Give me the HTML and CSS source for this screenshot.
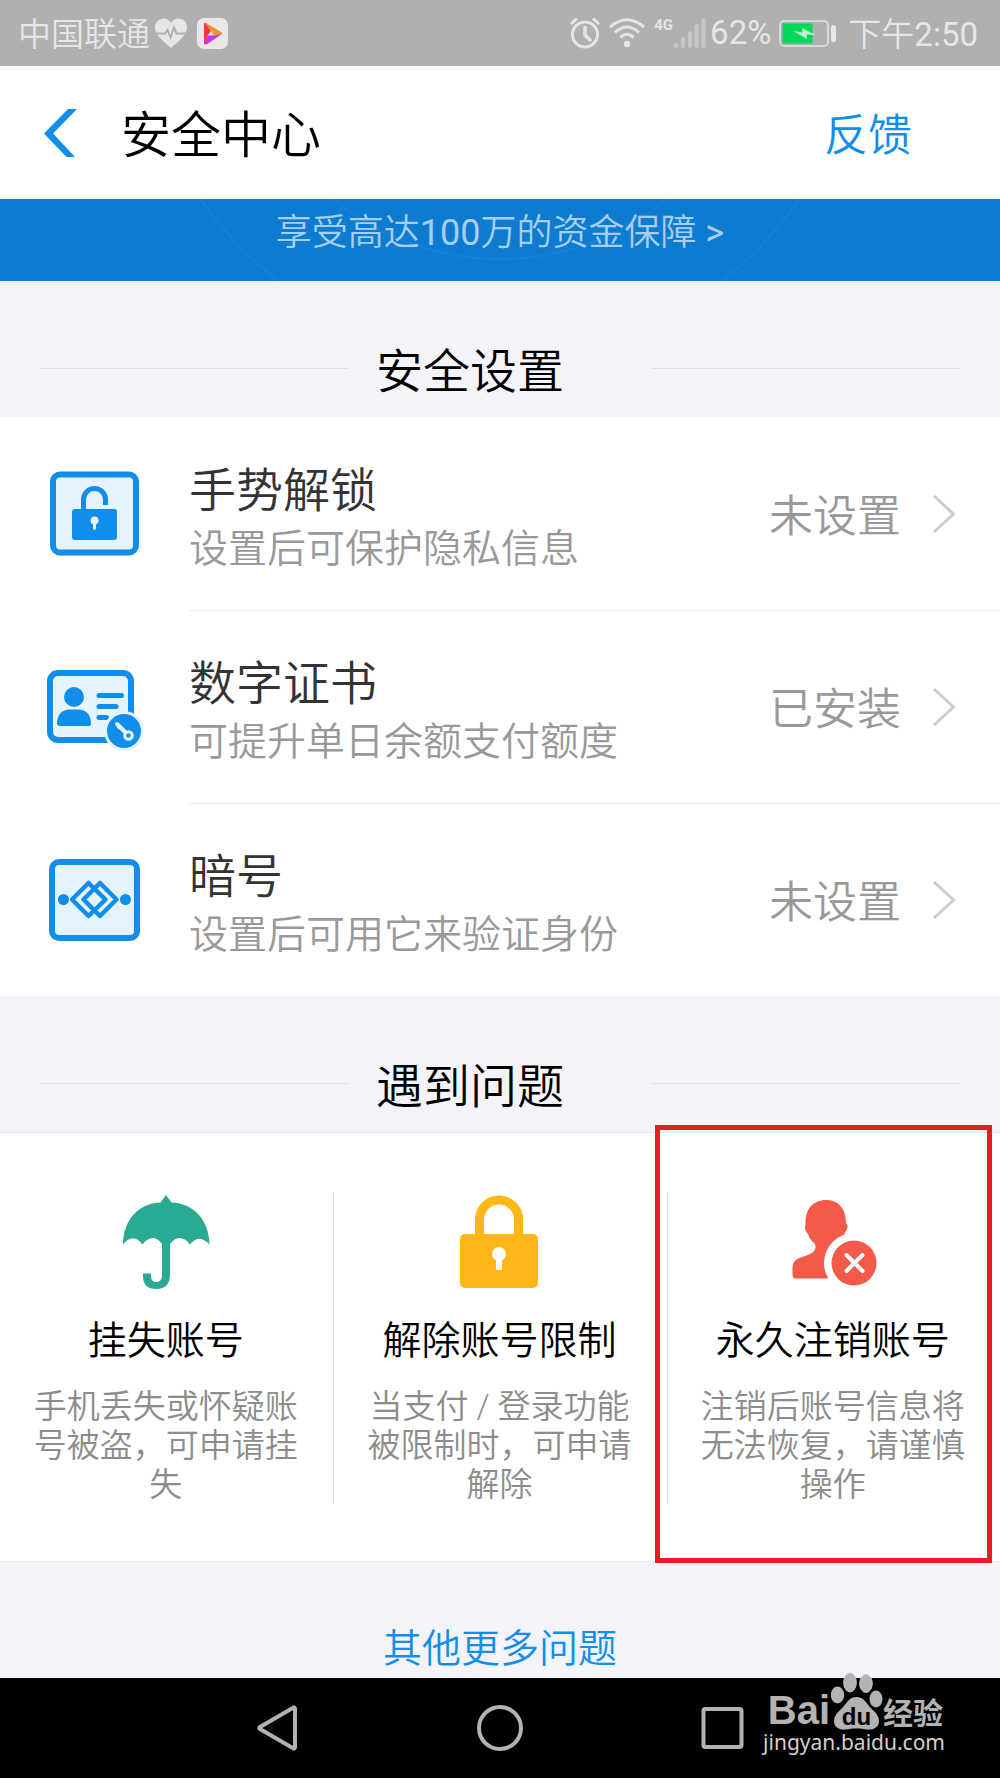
FILE: index.html
```html
<!DOCTYPE html>
<html lang="zh-CN">
<head>
<meta charset="utf-8">
<meta name="viewport" content="width=device-width, initial-scale=1">
<title>安全中心</title>
<link rel="stylesheet" href="styles.css">
</head>
<body>
<div class="status-bar">
  <span class="carrier">中国联通</span>
  <svg class="icon-heart" width="32" height="30" viewBox="0 0 32 30"><path fill="#e6e6e6" d="M16 30C11 25 0 18 0 9.500C0 4 4 .5 8.500 .5C12 .5 14.500 2.500 16 5C17.500 2.500 20 .5 23.500 .5C28 .5 32 4 32 9.500C32 18 21 25 16 30Z"/><path d="M1 15.500H10L12.500 12L15.500 19.500L19 9.500L21.500 15.500H31" fill="none" stroke="#b0b0b0" stroke-width="2"/></svg>
  <svg class="icon-app" width="31" height="31" viewBox="0 0 31 31"><rect width="31" height="31" rx="7" fill="#e8e8e8"/><path fill="#ee3a44" d="M7 6Q7 4.500 9 5L14 13L11 17L8 26.500Q7 26 7 25Z"/><path fill="#ea962f" d="M9 5L25 14.500Q26 15.500 25 16L17 18L14 12.500L8 5Z"/><path fill="#c637e8" d="M25 16L9.500 26.500Q8 27 7.500 25L11 17.500H18Z"/></svg>
  <span class="spacer"></span>
  <svg class="icon-alarm" width="32" height="32" viewBox="0 0 32 32" fill="none" stroke="#e6e6e6"><circle cx="16" cy="17.500" r="12.500" stroke-width="3"/><path d="M16 10.500V18L21 23" stroke-width="3.500" stroke-linecap="round" stroke-linejoin="round"/><path d="M2 7L8 1.500M24 1.500L30 7" stroke-width="3"/></svg>
  <svg class="icon-wifi" width="36" height="32" viewBox="0 0 36 32" fill="none" stroke="#e6e6e6" stroke-width="3"><path d="M1 10Q18-4.500 35 10M6 15.500Q18 4.500 30 15.500M11.500 20.500Q18 14 24.500 20.500"/><circle cx="18" cy="27" r="3.200" fill="#e6e6e6" stroke="none"/></svg>
  <span class="network">4G</span>
  <svg class="icon-signal" width="33" height="32" viewBox="0 0 33 32" stroke="#c6c6c6" stroke-width="4" stroke-linecap="round"><path d="M3 28V29M10 22V29M17 16V29M23.500 9V29M30.500 3V29"/></svg>
  <span class="digits">62%</span>
  <svg class="icon-battery" width="57" height="27" viewBox="0 0 57 27"><rect x="1" y="1" width="48" height="25" rx="4" fill="none" stroke="#e6e6e6" stroke-width="1.500"/><rect x="3.500" y="3.500" width="30" height="20" fill="#00d95a"/><path fill="#b9f5d0" d="M14 11L23.500 12.500L23 8L36.500 15L27.500 14.500L28 19Z"/><rect x="52" y="5" width="5" height="17" rx="2.500" fill="#e6e6e6"/></svg>
  <span class="time">下午<span class="digits">2:50</span></span>
</div>

<header class="title-bar">
  <button class="back" type="button" aria-label="返回"><svg width="33" height="48" viewBox="0 0 33 48"><path fill="#108ee9" d="M24 0H33L9 24.500L31 48H22.500L0 24.500Z"/></svg></button>
  <h1>安全中心</h1>
  <a class="feedback" href="#">反馈</a>
</header>

<main>
  <a class="banner" href="#">
    <svg class="banner-art" viewBox="0 0 1000 82" preserveAspectRatio="xMidYMid slice" fill="none" stroke="#1681d4" stroke-width="2" aria-hidden="true"><circle cx="500" cy="-204" r="264"/><circle cx="500" cy="-204" r="362"/></svg>
    <span class="banner-text">享受高达<span class="digits">100</span>万的资金保障 <span class="digits">&gt;</span></span>
  </a>

  <div class="section-head"><h2>安全设置</h2></div>
  <ul class="settings">
    <li><a class="row" href="#">
      <svg class="row-icon" width="100" height="100" viewBox="0 0 100 100"><rect x="7" y="11.500" width="83" height="78" rx="7" fill="#e5f3fe" stroke="#108ee9" stroke-width="6"/><path d="M37.500 48V36.500A11 11 0 0 1 59.500 36.500V42" fill="none" stroke="#108ee9" stroke-width="5"/><rect x="26" y="46" width="45" height="31" rx="3" fill="#108ee9"/><circle cx="48.500" cy="57.500" r="4" fill="#e5f3fe"/><path d="M48.500 58V66.500" stroke="#e5f3fe" stroke-width="3"/></svg>
      <span class="row-text"><span class="row-title">手势解锁</span><span class="row-sub">设置后可保护隐私信息</span></span>
      <span class="row-state">未设置</span>
      <svg class="chevron" width="24" height="40" viewBox="0 0 24 40"><path d="M2 2L21.500 20L2 38" fill="none" stroke="#ccc" stroke-width="3"/></svg>
    </a></li>
    <li><a class="row" href="#">
      <svg class="row-icon" width="100" height="100" viewBox="0 0 100 100"><rect x="4" y="17" width="81" height="67" rx="8" fill="#e5f3fe" stroke="#108ee9" stroke-width="6"/><circle cx="28" cy="41" r="10" fill="#108ee9"/><path d="M11 67.500C11 57 18 53.500 23 53.500H33C38 53.500 45 57 45 67.500Q45 70 42.500 70H13.500Q11 70 11 67.500Z" fill="#108ee9"/><path d="M53 39.500H75.500M53 50.500H70M53 61.500H60.500" stroke="#108ee9" stroke-width="5" stroke-linecap="round"/><circle cx="78" cy="75" r="20" fill="#e5f3fe"/><circle cx="78" cy="75" r="17" fill="#108ee9"/><circle cx="82.500" cy="79.500" r="3.800" fill="none" stroke="#e5f3fe" stroke-width="3"/><path d="M71 68L79 76" stroke="#e5f3fe" stroke-width="4" stroke-linecap="round"/><path d="M72 72.500L75 69.500" stroke="#e5f3fe" stroke-width="3"/></svg>
      <span class="row-text"><span class="row-title">数字证书</span><span class="row-sub">可提升单日余额支付额度</span></span>
      <span class="row-state">已安装</span>
      <svg class="chevron" width="24" height="40" viewBox="0 0 24 40"><path d="M2 2L21.500 20L2 38" fill="none" stroke="#ccc" stroke-width="3"/></svg>
    </a></li>
    <li><a class="row" href="#">
      <svg class="row-icon" width="100" height="100" viewBox="0 0 100 100"><rect x="6" y="13" width="85" height="76" rx="7" fill="#e5f3fe" stroke="#108ee9" stroke-width="6"/><g fill="none" stroke="#108ee9" stroke-width="4.500" stroke-linejoin="round"><path d="M42.500 34L59.500 50.500L42.500 67L26 50.500Z"/><path d="M54 34L70.500 50.500L54 67L37.500 50.500Z"/></g><circle cx="17.500" cy="50.500" r="5.500" fill="#108ee9"/><circle cx="79.500" cy="50.500" r="5.500" fill="#108ee9"/></svg>
      <span class="row-text"><span class="row-title">暗号</span><span class="row-sub">设置后可用它来验证身份</span></span>
      <span class="row-state">未设置</span>
      <svg class="chevron" width="24" height="40" viewBox="0 0 24 40"><path d="M2 2L21.500 20L2 38" fill="none" stroke="#ccc" stroke-width="3"/></svg>
    </a></li>
  </ul>

  <div class="section-head"><h2>遇到问题</h2></div>
  <ul class="cards">
    <li class="card"><a href="#">
      <svg width="100" height="100" viewBox="0 0 100 100"><path fill="#28ab92" d="M50 3L55.500 10.500C78 11.500 93 28 93.500 52.500Q83 41 74 52.500Q64 40 54 52V82Q54 97 40.500 97Q27 97 27 84V81.500H35V84Q35 90 40.500 90Q46 90 46 83V52Q37 40 26.500 52.500Q17 40 7 52.500C7.500 28 22 11.500 44.500 10.500Z"/></svg>
      <h3>挂失账号</h3>
      <p>手机丢失或怀疑账号被盗，可申请挂失</p>
    </a></li>
    <li class="card"><a href="#">
      <svg width="100" height="100" viewBox="0 0 100 100"><path d="M30.500 45V27.500A19.500 19.500 0 0 1 69.500 27.500V45" fill="none" stroke="#ffb617" stroke-width="9"/><rect x="11" y="42" width="78" height="54" rx="5" fill="#ffb617"/><circle cx="50" cy="62" r="7" fill="#fff"/><path d="M50 63V78" stroke="#fff" stroke-width="6"/></svg>
      <h3>解除账号限制</h3>
      <p>当支付 / 登录功能被限制时，可申请解除</p>
    </a></li>
    <li class="card marked"><a href="#">
      <svg width="100" height="100" viewBox="0 0 100 100"><path fill="#f35a4a" d="M43 8C55 8 63 16 63 31Q66 34 63.500 38Q62 40 61 43Q58 48 54 52V56Q54 60 62 61L77 66V86.500H12Q9.500 86.500 9.500 82V77C9.500 70 12 67.500 18 65.500L26 62.500Q33 60 32.500 54Q32.500 52 29 49Q26 46 25 42Q20.500 38 22.500 32C22 17 30 8 43 8Z"/><circle cx="71" cy="71" r="30" fill="#fff"/><circle cx="71" cy="71" r="22.500" fill="#f35a4a"/><path d="M63.500 63L79.500 79M79.500 63L63.500 79" stroke="#fff" stroke-width="4" stroke-linecap="round"/></svg>
      <h3>永久注销账号</h3>
      <p>注销后账号信息将无法恢复，请谨慎操作</p>
    </a></li>
  </ul>
  <a class="more" href="#">其他更多问题</a>
</main>

<nav class="nav-bar">
  <button type="button" aria-label="返回"><svg width="46" height="50" viewBox="0 0 46 50"><path d="M38.500 4.500Q40 4 40 6V44Q40 46 38.500 45.500L5 26Q3.500 25 5 24Z" fill="none" stroke="#b3b3b3" stroke-width="4"/></svg></button>
  <button type="button" aria-label="主页"><svg width="46" height="50" viewBox="0 0 46 50"><circle cx="23" cy="25" r="21" fill="none" stroke="#b3b3b3" stroke-width="4"/></svg></button>
  <button type="button" aria-label="最近任务"><svg width="46" height="50" viewBox="0 0 46 50"><rect x="4.500" y="6" width="38" height="38" rx="2" fill="none" stroke="#b3b3b3" stroke-width="4"/></svg></button>
  <div class="watermark">
    <div class="brand">
      <span class="brand-bai">Bai</span>
      <svg width="53" height="58" viewBox="0 0 53 58" fill="#b3b3b3"><ellipse cx="7.500" cy="23" rx="6.700" ry="8.500"/><ellipse cx="20" cy="10.500" rx="6.300" ry="9.500" stroke="#c9c9cd" stroke-width="1"/><ellipse cx="36" cy="11.500" rx="6.300" ry="9" stroke="#c9c9cd" stroke-width="1"/><ellipse cx="46" cy="27" rx="6.500" ry="8.500"/><path d="M26.500 25C33 25 36 30 39 34C43 39 49 42 49 49C49 55 44 58 38 57.500C33 57 31 56.500 26.500 56.500C22 56.500 20 57 15 57.500C9 58 4 55 4 49C4 42 10 39 14 34C17 30 20 25 26.500 25Z"/><text x="26.500" y="53" text-anchor="middle" font-family="Liberation Sans, sans-serif" font-weight="700" font-size="24" fill="#000">du</text></svg>
      <span class="brand-cn">经验</span>
    </div>
    <span class="brand-url">jingyan.baidu.com</span>
  </div>
</nav>
</body>
</html>
```
FILE: styles.css
```css
* { box-sizing: border-box; }

body {
  margin: 0;
  min-height: 100vh;
  display: flex;
  flex-direction: column;
  background: #f4f3f9;
  color: #000;
  font-family: Roboto, "Noto Sans CJK SC", sans-serif;
  font-weight: 350;
}

h1, h2, h3, p, ul { margin: 0; padding: 0; font-weight: inherit; }
li { list-style: none; }
a { color: inherit; text-decoration: none; }
button { padding: 0; border: 0; background: none; }
svg { display: block; flex: none; }
.digits { font-weight: 400; }

.status-bar {
  display: flex;
  align-items: center;
  height: 66px;
  padding: 0 22px 0 18px;
  background: #b0b0b0;
  color: #e6e6e6;
  font-size: 33px;
  line-height: 40px;
  white-space: nowrap;
}
.carrier { margin-right: 5px; padding-top: 4px; }
.icon-app { margin-left: 10px; }
.spacer { flex: 1; }
.icon-wifi { margin-left: 8px; }
.network {
  align-self: flex-start;
  margin: 16px 0 0 9px;
  font-size: 15px;
  line-height: 18px;
  font-weight: 700;
}
.icon-signal { margin-right: 4px; }
.icon-battery { margin: 0 12px 0 8px; }
.time { padding-top: 4px; }

.title-bar {
  display: flex;
  align-items: center;
  height: 133px;
  padding: 0 88px 0 44px;
  background: #fff;
}
.title-bar h1 { flex: 1; margin-left: 44px; padding-top: 6px; font-size: 50px; line-height: 60px; }
.feedback { padding-top: 6px; color: #108ee9; font-size: 44px; line-height: 60px; }

.banner {
  position: relative;
  display: block;
  height: 82px;
  padding-top: 10px;
  overflow: hidden;
  background: #0d7bd0;
  color: #a6cfef;
  font-size: 36px;
  line-height: 48px;
  text-align: center;
}
.banner-art { position: absolute; inset: 0; width: 100%; height: 100%; }
.banner-text { position: relative; }

.section-head {
  display: flex;
  align-items: center;
  height: 136px;
  padding: 38px 39px 0;
}
.section-head::before,
.section-head::after { content: ""; flex: 1; height: 1px; background: #e2e2e5; }
.section-head h2 { margin: 0 88px 0 28px; padding-top: 8px; font-size: 47px; line-height: 60px; }

.settings { background: #fff; }
.row { display: flex; align-items: center; height: 193px; padding: 0 44px 0 46px; }
.row-icon { margin-bottom: 2px; }
.row-text { flex: 1; padding-top: 12px; margin-left: 43px; }
.row-title, .row-sub { display: block; line-height: 58px; }
.row-title { color: #333; font-size: 47px; }
.row-sub { color: #999; font-size: 39px; }
.row-state { margin-right: 31px; padding-top: 6px; color: #999; font-size: 44px; line-height: 60px; }
.settings li + li::before {
  content: "";
  display: block;
  height: 1px;
  margin: 0 0 -1px 189px;
  background: #ececee;
}

.cards {
  display: grid;
  grid-template-columns: repeat(3, 1fr);
  padding: 59px 0 57px;
  border: solid #e6e6ea;
  border-width: 1px 0;
  background: #fff;
}
.card { position: relative; text-align: center; }
.card + .card { border-left: 1px solid #e2e2e5; }
.card a { display: flex; flex-direction: column; align-items: center; height: 312px; padding: 0 34px 0 32px; }
.card h3 { margin: 24px 0 21px; font-size: 39px; line-height: 50px; white-space: nowrap; }
.card p { color: #8c8c8c; font-size: 33px; line-height: 39px; }
.marked::after {
  content: "";
  position: absolute;
  inset: -67px 8px -59px -13px;
  border: 5px solid #ed1c24;
}

.more {
  display: block;
  padding: 62px 0 4px;
  color: #108ee9;
  font-size: 39px;
  line-height: 50px;
  text-align: center;
}

.nav-bar {
  position: relative;
  display: flex;
  align-items: center;
  justify-content: center;
  height: 100px;
  margin-top: auto;
  background: #000;
}
.nav-bar button { display: flex; justify-content: center; width: 222px; }

.watermark {
  position: absolute;
  right: 55px;
  bottom: 23px;
  color: #b3b3b3;
}
.brand { display: flex; align-items: flex-end; justify-content: flex-end; padding-right: 2px; }
.brand-bai { font: 700 40px/40px "Liberation Sans", sans-serif; }
.brand-cn { font: 700 30px/38px "Noto Sans CJK SC", sans-serif; }
.brand-url { display: block; font: 400 21px/25px "Noto Sans", sans-serif; color: #d0d0d0; }
```
